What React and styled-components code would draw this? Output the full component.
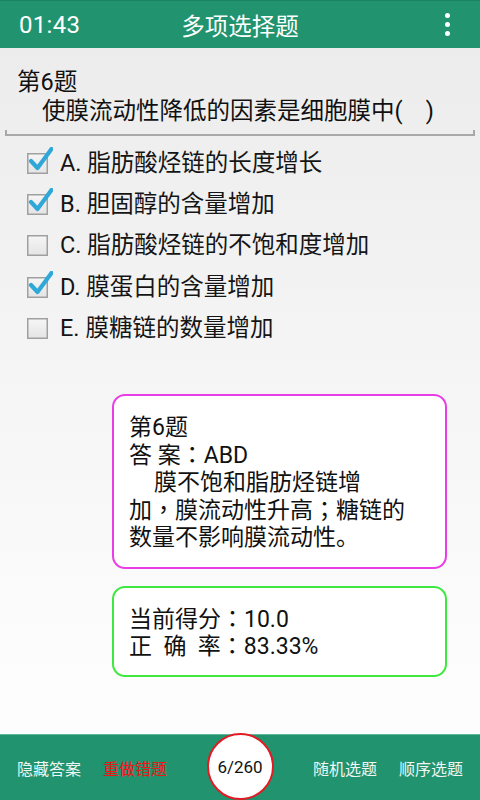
import React from "react";
import styled, { createGlobalStyle } from "styled-components";

const Global = createGlobalStyle`
  html, body { margin: 0; padding: 0; }
  body {
    font-family: Roboto, "Noto Sans CJK SC", "Noto Sans", sans-serif;
    color: #111;
  }
  * { box-sizing: border-box; }
`;

const GREEN = "#21946f";

const Page = styled.div`
  width: 480px;
  height: 800px;
  display: flex;
  flex-direction: column;
  background: linear-gradient(#ebebeb, #fdfdfd 85%);
  overflow: hidden;
`;

const TopBar = styled.header`
  height: 48px;
  flex: none;
  background: ${GREEN};
  border-top: 1px solid #1b8363;
  display: grid;
  grid-template-columns: 1fr auto 1fr;
  align-items: center;
  color: #fff;
`;

const Time = styled.div`
  font-size: 24px;
  padding-left: 19px;
  letter-spacing: 0.3px;
`;

const Title = styled.div`
  font-size: 23.5px;
`;

const MenuDots = styled.div`
  justify-self: end;
  margin-right: 30px;
  display: flex;
  flex-direction: column;
  gap: 4px;
  span {
    width: 5px;
    height: 5px;
    border-radius: 50%;
    background: #fff;
  }
`;

const Main = styled.main`
  flex: 1;
  display: flex;
  flex-direction: column;
`;

const Question = styled.section`
  padding: 20px 0 0;
  font-size: 23.5px;
  line-height: 29px;
`;

const QNum = styled.div`
  padding-left: 17px;
`;

const QText = styled.div`
  padding-left: 42px;
  white-space: pre;
`;

const Underline = styled.div`
  margin: 4px 5px 0;
  height: 6px;
  border: 2px solid #a9a9a9;
  border-top: none;
`;

const Options = styled.ul`
  list-style: none;
  margin: 4px 0 0;
  padding: 0;
`;

const Option = styled.li`
  height: 41.3px;
  display: flex;
  align-items: center;
  padding-left: 25px;
  gap: 7px;
  font-size: 23.5px;
  color: #151515;
`;

const Box = styled.svg`
  flex: none;
  width: 28px;
  height: 28px;
`;

const CheckBox = ({ checked }) => (
  <Box viewBox="0 0 28 28">
    <defs>
      <linearGradient id="bx" x1="0" y1="0" x2="0" y2="1">
        <stop offset="0" stopColor="#f6f6f6" />
        <stop offset="1" stopColor="#e4e4e4" />
      </linearGradient>
    </defs>
    <rect x="2.75" y="6.75" width="19.5" height="19.5" fill="url(#bx)" stroke="#a0a0a0" strokeWidth="1.5" />
    {checked && (
      <path
        d="M6 14 L12.5 21 L26.5 2"
        fill="none"
        stroke="#2fa8d8"
        strokeWidth="4.2"
        strokeLinecap="round"
        strokeLinejoin="round"
      />
    )}
  </Box>
);

const Card = styled.div`
  margin: ${(p) => p.$mt}px 33px 0 112px;
  background: #fff;
  border: 2px solid ${(p) => p.$color};
  border-radius: 13px;
  padding: ${(p) => p.$pt}px 16px ${(p) => p.$pb}px 15px;
  font-size: 23px;
  line-height: 27.5px;
  color: #111;
`;

const Line = styled.div`
  white-space: pre;
  padding-left: ${(p) => (p.$indent ? 25 : 0)}px;
`;

const Punct = styled.span`
  font-family: Roboto, "Noto Sans CJK TC", sans-serif;
`;

const BottomBar = styled.footer`
  flex: none;
  height: 66px;
  background: ${GREEN};
  border-top: 1px solid #5fb79a;
  display: grid;
  grid-template-columns: 1fr auto 1fr;
  align-items: center;
  font-size: 16px;
  color: #eef5f2;
`;

const Group = styled.div`
  display: flex;
  gap: 22px;
  justify-content: ${(p) => (p.$end ? "flex-end" : "flex-start")};
  padding: ${(p) => (p.$end ? "0 17px 0 0" : "0 0 0 17px")};
`;

const Action = styled.span`
  color: ${(p) => (p.$red ? "#f01414" : "#eef5f2")};
`;

const Counter = styled.div`
  width: 67px;
  height: 67px;
  margin-top: -2px;
  border-radius: 50%;
  background: #fff;
  border: 2px solid #e01b24;
  display: flex;
  align-items: center;
  justify-content: center;
  color: #111;
  font-size: 17px;
`;

const options = [
  { label: "A. 脂肪酸烃链的长度增长", checked: true },
  { label: "B. 胆固醇的含量增加", checked: true },
  { label: "C. 脂肪酸烃链的不饱和度增加", checked: false },
  { label: "D. 膜蛋白的含量增加", checked: true },
  { label: "E. 膜糖链的数量增加", checked: false },
];

export default function App() {
  return (
    <>
      <Global />
      <Page>
        <TopBar>
          <Time>01:43</Time>
          <Title>多项选择题</Title>
          <MenuDots>
            <span />
            <span />
            <span />
          </MenuDots>
        </TopBar>
        <Main>
          <Question>
            <QNum>第6题</QNum>
            <QText>使膜流动性降低的因素是细胞膜中(    )</QText>
            <Underline />
          </Question>
          <Options>
            {options.map((o) => (
              <Option key={o.label}>
                <CheckBox checked={o.checked} />
                <span>{o.label}</span>
              </Option>
            ))}
          </Options>
          <Card $color="#e83ee8" $mt={48} $pt={18} $pb={15}>
            <Line>第6题</Line>
            <Line>答 案<Punct>：</Punct>ABD</Line>
            <Line $indent>膜不饱和脂肪烃链增</Line>
            <Line>加<Punct>，</Punct>膜流动性升高<Punct>；</Punct>糖链的</Line>
            <Line>数量不影响膜流动性。</Line>
          </Card>
          <Card $color="#3ee83e" $mt={17} $pt={18} $pb={14}>
            <Line>当前得分<Punct>：</Punct>10.0</Line>
            <Line>正  确  率<Punct>：</Punct>83.33%</Line>
          </Card>
        </Main>
        <BottomBar>
          <Group>
            <Action>隐藏答案</Action>
            <Action $red>重做错题</Action>
          </Group>
          <Counter>6/260</Counter>
          <Group $end>
            <Action>随机选题</Action>
            <Action>顺序选题</Action>
          </Group>
        </BottomBar>
      </Page>
    </>
  );
}
